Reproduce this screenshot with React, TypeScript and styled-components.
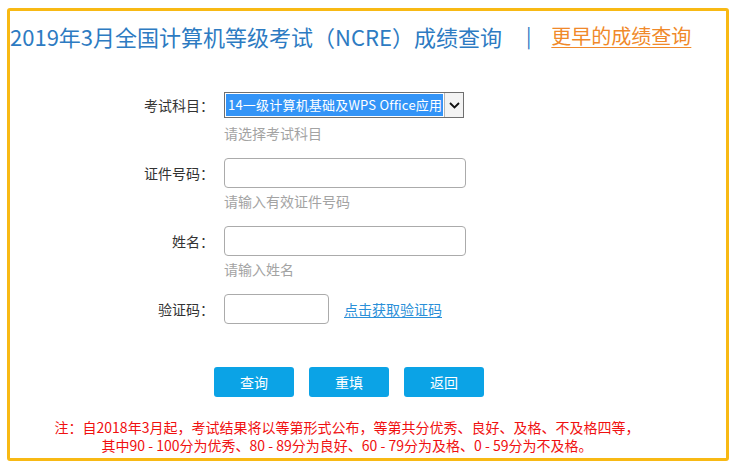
import React from "react";
import styled, { createGlobalStyle } from "styled-components";

const GlobalStyle = createGlobalStyle`
  html, body {
    margin: 0;
    padding: 0;
    background: #fff;
  }
  body {
    font-family: "Noto Sans CJK SC", "Noto Sans", sans-serif;
    color: #333;
  }
`;

const Frame = styled.div`
  box-sizing: border-box;
  width: 722px;
  height: 453px;
  margin: 8px 0 0 7px;
  border: 3px solid #f8b914;
  border-radius: 3px;
  display: flex;
  flex-direction: column;
`;

const Header = styled.div`
  display: flex;
  align-items: center;
  height: 30px;
  margin-top: 10px;
  font-size: 22px;
  line-height: 30px;
  color: #2d7bc2;
  white-space: nowrap;
`;

const Divider = styled.span`
  margin: 0 20px 0 24px;
  font-size: 20px;
`;

const OldLink = styled.a`
  font-size: 20px;
  color: #f0892a;
  text-decoration: underline;
  text-underline-offset: 3px;
  text-decoration-thickness: 1px;
`;

const Form = styled.div`
  margin-top: 39px;
  display: flex;
  flex-direction: column;
`;

const Field = styled.div<{ $last?: boolean }>`
  display: grid;
  grid-template-columns: 204px auto;
  column-gap: 10px;
  margin-bottom: ${(p) => (p.$last ? "0" : "15px")};
`;

const Label = styled.div`
  height: 30px;
  line-height: 30px;
  text-align: right;
  font-size: 14px;
  color: #333;
`;

const Control = styled.div`
  display: flex;
  align-items: center;
  height: 30px;
  gap: 15px;
`;

const Hint = styled.div`
  grid-column: 2;
  margin-top: 3px;
  height: 20px;
  line-height: 20px;
  font-size: 14px;
  color: #a3a3a3;
`;

const Select = styled.div`
  box-sizing: border-box;
  width: 240px;
  height: 26px;
  border: 1px solid #6f6f6f;
  display: flex;
  background: #fff;
`;

const Selected = styled.div`
  flex: 1;
  margin: 1px;
  background: #3394f7;
  color: #fff;
  font-size: 13px;
  line-height: 22px;
  padding-left: 2px;
  white-space: nowrap;
  overflow: hidden;
  letter-spacing: 0.2px;
`;

const Arrow = styled.div`
  width: 18px;
  display: flex;
  align-items: center;
  justify-content: center;
  border-left: 1px solid #b5b5b5;
  background: #f3f3f3;
`;

const TextInput = styled.input<{ $w: number }>`
  box-sizing: border-box;
  width: ${(p) => p.$w}px;
  height: 30px;
  border: 1px solid #ababab;
  border-radius: 4px;
  padding: 0 6px;
  font-size: 14px;
  outline: none;
`;

const CaptchaLink = styled.a`
  font-size: 14px;
  color: #2a8fd8;
  text-decoration: underline;
  text-underline-offset: 2px;
`;

const Buttons = styled.div`
  display: flex;
  gap: 15px;
  margin: 43px 0 0 204px;
`;

const Button = styled.button`
  width: 80px;
  height: 30px;
  border: none;
  border-radius: 3px;
  background: #0ba3e6;
  color: #fff;
  font-family: inherit;
  font-size: 14px;
  padding: 0;
  cursor: pointer;
`;

const Note = styled.div`
  margin-top: 21px;
  padding-right: 42px;
  text-align: center;
  font-size: 14px;
  line-height: 18px;
  color: #f01010;
`;

const NoteLine = styled.div`
  white-space: nowrap;
`;

export default function App() {
  return (
    <>
      <GlobalStyle />
      <Frame>
        <Header>
          2019年3月全国计算机等级考试（NCRE）成绩查询
          <Divider>|</Divider>
          <OldLink href="#">更早的成绩查询</OldLink>
        </Header>
        <Form>
          <Field>
            <Label>考试科目：</Label>
            <Control>
              <Select>
                <Selected>14一级计算机基础及WPS Office应用</Selected>
                <Arrow>
                  <svg width="11" height="7" viewBox="0 0 11 7">
                    <path d="M1 1l4.5 4.5L10 1" fill="none" stroke="#111" strokeWidth="1.8" />
                  </svg>
                </Arrow>
              </Select>
            </Control>
            <Hint>请选择考试科目</Hint>
          </Field>
          <Field>
            <Label>证件号码：</Label>
            <Control>
              <TextInput $w={242} />
            </Control>
            <Hint>请输入有效证件号码</Hint>
          </Field>
          <Field>
            <Label>姓名：</Label>
            <Control>
              <TextInput $w={242} />
            </Control>
            <Hint>请输入姓名</Hint>
          </Field>
          <Field $last>
            <Label>验证码：</Label>
            <Control>
              <TextInput $w={105} />
              <CaptchaLink href="#">点击获取验证码</CaptchaLink>
            </Control>
          </Field>
        </Form>
        <Buttons>
          <Button>查询</Button>
          <Button>重填</Button>
          <Button>返回</Button>
        </Buttons>
        <Note>
          <NoteLine>注：自2018年3月起，考试结果将以等第形式公布，等第共分优秀、良好、及格、不及格四等，</NoteLine>
          <NoteLine>其中90 - 100分为优秀、80 - 89分为良好、60 - 79分为及格、0 - 59分为不及格。</NoteLine>
        </Note>
      </Frame>
    </>
  );
}
